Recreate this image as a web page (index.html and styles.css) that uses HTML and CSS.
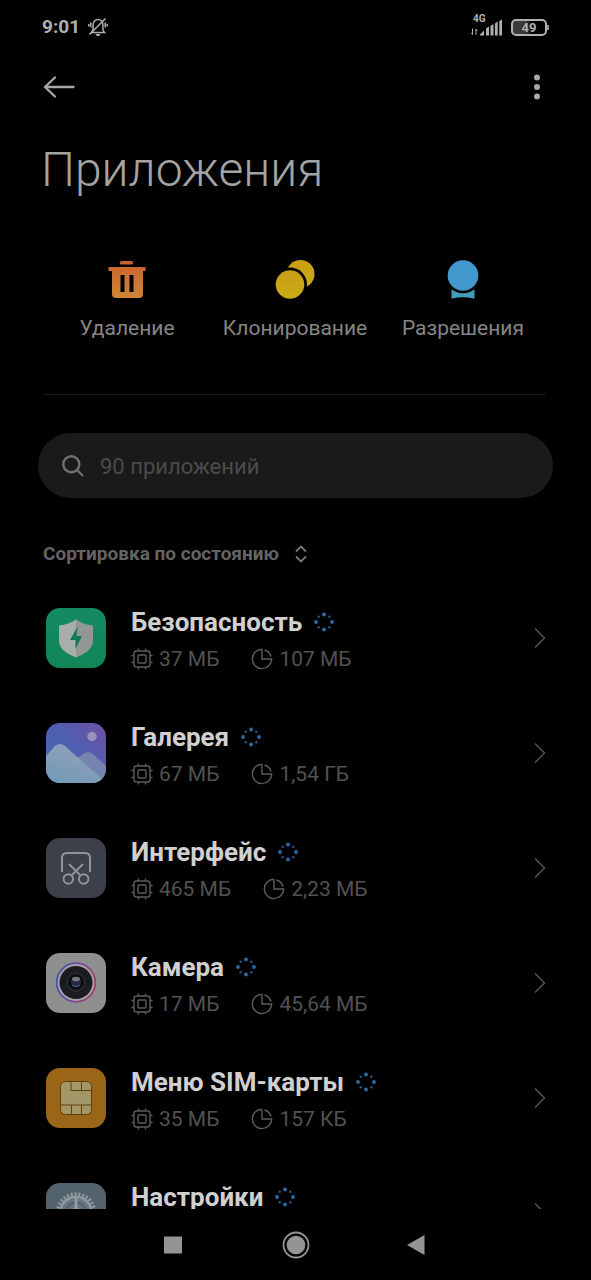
FILE: index.html
```html
<!DOCTYPE html>
<html lang="ru">
<head>
<meta charset="utf-8">
<meta name="viewport" content="width=device-width, initial-scale=1">
<title>Приложения</title>
<link rel="stylesheet" href="styles.css">
</head>
<body>
<svg class="defs" aria-hidden="true">
  <symbol id="chip" viewBox="0 0 22 22">
    <g fill="none" stroke="currentColor">
      <rect x="3" y="3" width="16" height="16" rx="2.5" stroke-width="1.4"/>
      <rect x="7" y="7" width="8" height="8" rx="1" stroke-width="1.4"/>
      <path stroke-width="1.3" d="M7.500 3V.5M14.500 3V.5M7.500 19v2.500M14.500 19v2.500M3 7.500H.5M3 14.500H.5M19 7.500h2.500M19 14.500h2.500"/>
    </g>
  </symbol>
  <symbol id="pie" viewBox="0 0 22 22">
    <g fill="none" stroke="currentColor" stroke-width="1.4">
      <path d="M11 1.200A9.700 9.700 0 1 0 20.700 11H11V1.200"/>
      <path d="M13.500 2A9.300 9.300 0 0 1 20 8.600"/>
    </g>
  </symbol>
  <symbol id="dots" viewBox="0 0 20 20">
    <g fill="#2d6ba6">
      <circle cx="10" cy="2.500" r="1.900"/><circle cx="10" cy="17.500" r="1.900"/><circle cx="2" cy="10" r="1.900"/><circle cx="18" cy="10" r="1.900"/>
    </g>
    <g fill="#28587f">
      <circle cx="4.700" cy="4.700" r="1.200"/><circle cx="15.300" cy="4.700" r="1.200"/><circle cx="4.700" cy="15.300" r="1.200"/><circle cx="15.300" cy="15.300" r="1.200"/>
    </g>
  </symbol>
  <symbol id="chevron" viewBox="0 0 12 22">
    <path d="M1 1.500 10.500 11 1 20.500" fill="none" stroke="currentColor" stroke-width="1.500"/>
  </symbol>
</svg>

<div class="screen">
  <header class="status">
    <div class="status-group">
      <time class="clock">9:01</time>
      <svg class="mute" viewBox="0 0 20 20" role="img" aria-label="Без звука">
        <g fill="none" stroke="currentColor" stroke-width="1.500">
          <path d="M3.500 15.500h13c-1.300-1.200-1.600-2.200-1.600-4V7.800c0-3-2.100-5.300-4.900-5.300S5.100 4.800 5.100 7.800v3.700c0 1.800-.3 2.800-1.600 4z"/>
          <path d="M17.500 1.500 1.500 17.500M2.800 5.500v5M.8 7v2.500M17.200 5.500v5M19.200 7v2.500"/>
        </g>
        <path d="M7.500 17h5c-.5 1.500-1.300 2-2.500 2s-2-.5-2.500-2z" fill="currentColor"/>
      </svg>
    </div>
    <div class="status-group right">
      <div class="signal">
        <span class="net">4G</span>
        <svg class="bars" viewBox="0 0 32 17" aria-hidden="true">
          <g fill="currentColor">
            <path d="M9 16.500v-1l4-4v5zM15 9.500l3-2v9h-3zM19.500 7l3-2v11.500h-3zM24 4.500l2.700-2v14H24zM28.300 2 31 .5v16h-2.700z"/>
          </g>
          <path d="M1.500 9.500v6M.3 13.800l1.200 1.700M5 16V10l1.300 1.800" fill="none" stroke="currentColor" stroke-width="1"/>
        </svg>
      </div>
      <div class="battery"><span class="battery-body">49</span><span class="battery-tip"></span></div>
    </div>
  </header>

  <nav class="toolbar" aria-label="Панель">
    <button class="icon-btn" type="button" aria-label="Назад">
      <svg class="back" viewBox="0 0 32 22"><path d="M30.500 11H2M12 1.500 2 11l10 9.500" fill="none" stroke="currentColor" stroke-width="2.300" stroke-linecap="round" stroke-linejoin="round"/></svg>
    </button>
    <button class="icon-btn" type="button" aria-label="Ещё">
      <svg class="more" viewBox="0 0 6 26"><g fill="currentColor"><circle cx="3" cy="3.500" r="3"/><circle cx="3" cy="13" r="3"/><circle cx="3" cy="22.500" r="3"/></g></svg>
    </button>
  </nav>

  <main class="content">
    <h1 class="title">Приложения</h1>

    <div class="actions">
      <button class="action" type="button">
        <svg class="action-icon" viewBox="0 0 40 40" aria-hidden="true">
          <defs><linearGradient id="gt" x1="0" y1="0" x2="0" y2="1"><stop offset="0" stop-color="#c9612f"/><stop offset="1" stop-color="#cd8636"/></linearGradient></defs>
          <path fill="url(#gt)" fill-rule="evenodd" d="M14.500 1h10q1.500 0 1.500 1.500v1q0 1-1.500 1h-10q-1.500 0-1.500-1v-1Q13 1 14.500 1zM1.500 7h37v4H36v23q0 4-4 4H9q-4 0-4-4V11H1.500zM13.500 15v17h4V15zM22.500 15v17h4V15z"/>
        </svg>
        <span>Удаление</span>
      </button>
      <button class="action" type="button">
        <svg class="action-icon" viewBox="0 0 40 40" aria-hidden="true">
          <defs><linearGradient id="gc" x1="0" y1="0" x2="0" y2="1"><stop offset="0" stop-color="#c99d16"/><stop offset="1" stop-color="#c9ad12"/></linearGradient></defs>
          <circle cx="25.500" cy="14" r="14" fill="url(#gc)"/>
          <circle cx="15" cy="24.500" r="17" fill="#000"/>
          <circle cx="15" cy="24.500" r="14.300" fill="url(#gc)"/>
        </svg>
        <span>Клонирование</span>
      </button>
      <button class="action" type="button">
        <svg class="action-icon" viewBox="0 0 40 40" aria-hidden="true">
          <path d="M8.500 29.500 20 33l11.500-3.500V38q0 .7-.8.500Q20 36 9.300 38.500q-.8.200-.8-.5z" fill="#439cb9"/>
          <circle cx="20" cy="15.500" r="17.800" fill="#000"/>
          <circle cx="20" cy="15.500" r="15.300" fill="#4298cd"/>
        </svg>
        <span>Разрешения</span>
      </button>
    </div>

    <hr class="rule">

    <label class="search">
      <svg class="search-icon" viewBox="0 0 22 22" aria-hidden="true"><g fill="none" stroke="currentColor" stroke-width="2.400"><circle cx="9.300" cy="9.300" r="8"/><path d="m15 15 6 6"/></g></svg>
      <input class="search-input" type="search" placeholder="90 приложений" aria-label="Поиск приложений">
    </label>

    <button class="sort" type="button">
      <span>Сортировка по состоянию</span>
      <svg class="sort-icon" viewBox="0 0 12 18" aria-hidden="true"><path d="m1 6.500 5-5 5 5M1 11.500l5 5 5-5" fill="none" stroke="currentColor" stroke-width="1.800"/></svg>
    </button>

    <div class="list">
      <a class="row" href="#security">
        <svg class="app-icon" viewBox="0 0 60 60" aria-hidden="true">
          <defs><linearGradient id="gs" x1="0" y1="0" x2="0" y2="1"><stop offset="0" stop-color="#148a62"/><stop offset="1" stop-color="#108557"/></linearGradient></defs>
          <rect width="60" height="60" rx="14" fill="url(#gs)"/>
          <path d="M30 11.500c5 3.500 10 5 17 6v15C47 41 39 46 30 49.500z" fill="#929795"/>
          <path d="M30 11.500c-5 3.500-10 5-17 6v15C13 41 21 46 30 49.500z" fill="#a9aeab"/>
          <path d="M31.500 18.500 24 32h5.500v9L36 28h-5.500z" fill="#127954"/>
        </svg>
        <span class="info">
          <span class="name">Безопасность <svg class="dots"><use href="#dots"/></svg></span>
          <span class="meta"><span class="stat"><svg class="mini"><use href="#chip"/></svg>37 МБ</span><span class="stat"><svg class="mini"><use href="#pie"/></svg>107 МБ</span></span>
        </span>
        <svg class="chevron"><use href="#chevron"/></svg>
      </a>
      <a class="row" href="#gallery">
        <svg class="app-icon" viewBox="0 0 60 60" aria-hidden="true">
          <defs>
            <linearGradient id="gg" x1="0" y1="1" x2="1" y2="0"><stop offset="0" stop-color="#416fae"/><stop offset=".5" stop-color="#4c60b0"/><stop offset="1" stop-color="#6f50a8"/></linearGradient>
            <linearGradient id="gm" x1="0" y1="1" x2=".5" y2="0"><stop offset="0" stop-color="#6f9bb4"/><stop offset="1" stop-color="#949fbb"/></linearGradient>
            <clipPath id="cg"><rect width="60" height="60" rx="14"/></clipPath>
          </defs>
          <g clip-path="url(#cg)">
            <rect width="60" height="60" fill="url(#gg)"/>
            <circle cx="46" cy="13.500" r="4.700" fill="#9d91bb"/>
            <path d="M30 36l7-5q5-4 10 0l13 12v18H30z" fill="#7682af"/>
            <path d="M0 33 9 23q5-4 10 0l37 33 4 4H0z" fill="url(#gm)"/>
          </g>
        </svg>
        <span class="info">
          <span class="name">Галерея <svg class="dots"><use href="#dots"/></svg></span>
          <span class="meta"><span class="stat"><svg class="mini"><use href="#chip"/></svg>67 МБ</span><span class="stat"><svg class="mini"><use href="#pie"/></svg>1,54 ГБ</span></span>
        </span>
        <svg class="chevron"><use href="#chevron"/></svg>
      </a>
      <a class="row" href="#interface">
        <svg class="app-icon" viewBox="0 0 60 60" aria-hidden="true">
          <rect width="60" height="60" rx="14" fill="#3b404b"/>
          <g fill="none" stroke="#919398" stroke-width="2">
            <path d="M16 34V20q0-5 5-5h18q5 0 5 5v14"/>
            <circle cx="22.300" cy="41" r="4.700"/><circle cx="37.700" cy="41" r="4.700"/>
            <path d="M23 26l11.500 11.500M37 26 25.500 37.500"/>
          </g>
        </svg>
        <span class="info">
          <span class="name">Интерфейс <svg class="dots"><use href="#dots"/></svg></span>
          <span class="meta"><span class="stat"><svg class="mini"><use href="#chip"/></svg>465 МБ</span><span class="stat"><svg class="mini"><use href="#pie"/></svg>2,23 МБ</span></span>
        </span>
        <svg class="chevron"><use href="#chevron"/></svg>
      </a>
      <a class="row" href="#camera">
        <svg class="app-icon" viewBox="0 0 60 60" aria-hidden="true">
          <defs><linearGradient id="gr" x1="0" y1=".3" x2="1" y2=".6"><stop offset="0" stop-color="#4654a4"/><stop offset=".5" stop-color="#74489c"/><stop offset="1" stop-color="#a83c62"/></linearGradient></defs>
          <rect width="60" height="60" rx="14" fill="#8e908f"/>
          <circle cx="30" cy="29.500" r="19.300" fill="#a2a2a8" stroke="url(#gr)" stroke-width="1.800"/>
          <circle cx="30" cy="29.500" r="16.500" fill="#1b1c20"/>
          <circle cx="30" cy="29" r="9" fill="#15161b" stroke="#33353d" stroke-width="1"/>
          <circle cx="30" cy="29" r="6" fill="#22283d" stroke="#08090c" stroke-width="1.500"/>
          <ellipse cx="30" cy="26" rx="4" ry="2.300" fill="#77787e"/>
          <path d="M26 32q4 3 8 0" fill="none" stroke="#40538a" stroke-width="1.500"/>
        </svg>
        <span class="info">
          <span class="name">Камера <svg class="dots"><use href="#dots"/></svg></span>
          <span class="meta"><span class="stat"><svg class="mini"><use href="#chip"/></svg>17 МБ</span><span class="stat"><svg class="mini"><use href="#pie"/></svg>45,64 МБ</span></span>
        </span>
        <svg class="chevron"><use href="#chevron"/></svg>
      </a>
      <a class="row" href="#sim">
        <svg class="app-icon" viewBox="0 0 60 60" aria-hidden="true">
          <rect width="60" height="60" rx="14" fill="#9b6518"/>
          <rect x="14.500" y="13.500" width="31" height="33" rx="5" fill="#a39768" stroke="#60420f" stroke-width="1"/>
          <path d="M25 13.500v9h20.500M35.500 13.500v9M14.500 37h31M25.500 37v9.500M35.500 37v9.500" fill="none" stroke="#60420f" stroke-width="1"/>
        </svg>
        <span class="info">
          <span class="name">Меню SIM-карты <svg class="dots"><use href="#dots"/></svg></span>
          <span class="meta"><span class="stat"><svg class="mini"><use href="#chip"/></svg>35 МБ</span><span class="stat"><svg class="mini"><use href="#pie"/></svg>157 КБ</span></span>
        </span>
        <svg class="chevron"><use href="#chevron"/></svg>
      </a>
      <a class="row" href="#settings">
        <svg class="app-icon" viewBox="0 0 60 60" aria-hidden="true">
          <rect width="60" height="60" rx="14" fill="#53636e"/>
          <circle cx="30" cy="29.500" r="18.500" fill="none" stroke="#929a9f" stroke-width="3.500" stroke-dasharray="2 1.874"/>
          <circle cx="30" cy="29.500" r="15.700" fill="#667580" stroke="#929a9f" stroke-width="2.500"/>
          <circle cx="30" cy="29.500" r="10" fill="none" stroke="#53636e" stroke-width="2"/>
          <path d="M30 30V14M30 30l-14 8M30 30l14 8" stroke="#929a9f" stroke-width="3"/>
          <circle cx="30" cy="29.500" r="5" fill="#929a9f"/>
        </svg>
        <span class="info">
          <span class="name">Настройки <svg class="dots"><use href="#dots"/></svg></span>
        </span>
        <svg class="chevron"><use href="#chevron"/></svg>
      </a>
    </div>
  </main>

  <nav class="navbar" aria-label="Навигация">
    <button class="icon-btn" type="button" aria-label="Недавние"><svg class="nav-icon" viewBox="0 0 28 28"><path d="M4 5.500h18v17H4z" fill="currentColor"/></svg></button>
    <button class="icon-btn" type="button" aria-label="Домой"><svg class="nav-icon" viewBox="0 0 28 28"><circle cx="14" cy="14" r="12.500" fill="none" stroke="currentColor" stroke-width="1.800"/><circle cx="14" cy="14" r="9.300" fill="currentColor"/></svg></button>
    <button class="icon-btn" type="button" aria-label="Назад"><svg class="nav-icon" viewBox="0 0 28 28"><path d="M3 14 20.500 4v20z" fill="currentColor"/></svg></button>
  </nav>
</div>
</body>
</html>
```
FILE: styles.css
```css
* { box-sizing: border-box; }

body {
  margin: 0;
  background: #000;
  color: #9c9c9c;
  font-family: Roboto, "Noto Sans", sans-serif;
}

button {
  padding: 0;
  border: 0;
  background: none;
  color: inherit;
  font: inherit;
}

svg { display: block; flex: none; }

.defs { position: absolute; width: 0; height: 0; }

.screen {
  display: flex;
  flex-direction: column;
  height: 100vh;
}

.status {
  display: flex;
  flex: none;
  align-items: center;
  justify-content: space-between;
  height: 54px;
  padding: 0 42px;
  color: #b0b0b0;
}

.status-group { display: flex; align-items: center; gap: 8px; }
.clock { font-size: 19px; line-height: 24px; font-weight: 700; }
.mute { width: 20px; height: 20px; }

.signal { display: flex; flex-direction: column; padding-bottom: 4px; }
.net { padding-left: 2px; font-size: 10px; line-height: 8px; height: 4px; font-weight: 700; }
.bars { width: 32px; height: 17px; }

.battery { display: flex; align-items: center; }
.battery-body {
  width: 36px;
  height: 17px;
  border: 2px solid #b0b0b0;
  border-radius: 5px;
  background: linear-gradient(90deg, #3a3a3a 40%, #000 60%);
  font-size: 13px;
  line-height: 14px;
  font-weight: 700;
  text-align: center;
}
.battery-tip { width: 2px; height: 5px; background: #909090; }

.toolbar {
  display: flex;
  flex: none;
  align-items: center;
  justify-content: space-between;
  height: 66px;
  padding: 0 51px 0 43px;
  color: #a8a8a8;
}
.icon-btn { display: flex; align-items: center; justify-content: center; }
.back { width: 32px; height: 22px; }
.more { width: 6px; height: 26px; }

.content { flex: 1; min-height: 0; overflow: hidden; }

.title {
  margin: 22px 41px 0;
  color: #a3a3a3;
  font-size: 48px;
  line-height: 56px;
  font-weight: 300;
}

.actions {
  display: grid;
  grid-template-columns: repeat(3, 1fr);
  margin: 62px 44px 0 43px;
}
.action {
  display: flex;
  flex-direction: column;
  align-items: center;
  gap: 16px;
  color: #858585;
  font-size: 21px;
  line-height: 24px;
}
.action-icon { width: 40px; height: 40px; }

.rule {
  height: 1px;
  margin: 54px 45px 38px 43px;
  border: 0;
  background: #1b1b1b;
}

.search {
  display: flex;
  align-items: center;
  gap: 16px;
  height: 65px;
  margin: 0 38px;
  padding: 0 24px;
  border-radius: 33px;
  background: #1a1a1a;
  color: #707070;
}
.search-icon { width: 22px; height: 22px; }
.search-input {
  flex: 1;
  min-width: 0;
  padding: 2px 0 0;
  border: 0;
  outline: 0;
  background: none;
  color: #999;
  font: 22px/28px Roboto, "Noto Sans", sans-serif;
}
.search-input::placeholder { color: #4b4b4b; opacity: 1; }

.sort {
  display: flex;
  align-items: center;
  gap: 16px;
  margin: 44px 43px 15px;
  color: #646464;
  font-size: 19px;
  line-height: 24px;
  font-weight: 700;
}
.sort-icon { width: 12px; height: 18px; color: #777; }

.row {
  display: flex;
  align-items: flex-start;
  height: 115px;
  padding: 27px 45px 0 46px;
  color: #525252;
  text-decoration: none;
}
.app-icon { width: 60px; height: 60px; }
.info {
  display: flex;
  flex: 1;
  flex-direction: column;
  gap: 7px;
  margin: -2px 0 0 25px;
}
.name {
  display: flex;
  align-items: center;
  gap: 12px;
  color: #d0d0d0;
  font-size: 26px;
  line-height: 32px;
  font-weight: 700;
}
.dots { width: 20px; height: 20px; }
.meta { display: flex; gap: 32px; font-size: 21px; line-height: 28px; }
.stat { display: flex; align-items: center; gap: 6px; }
.mini { width: 22px; height: 22px; color: #5c5c5c; }
.chevron { width: 12px; height: 22px; margin-top: 19px; }

.navbar {
  display: flex;
  flex: none;
  align-items: center;
  justify-content: center;
  gap: 94px;
  height: 71px;
  color: #949494;
}
.nav-icon { width: 28px; height: 28px; }
```
